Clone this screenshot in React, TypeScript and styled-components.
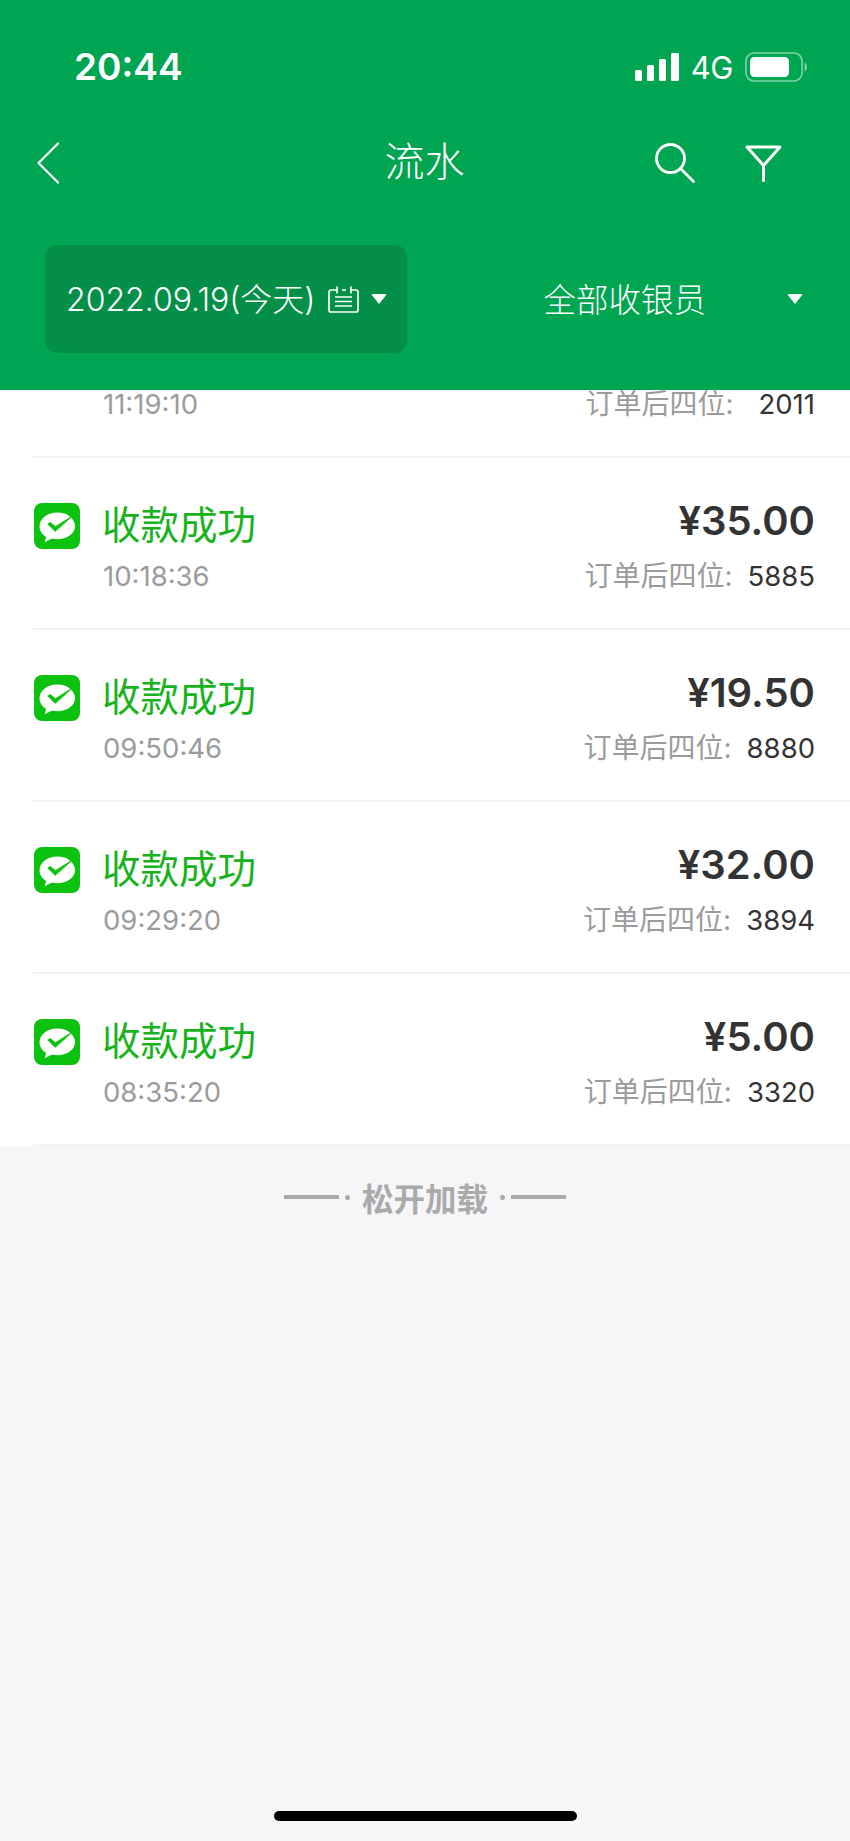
import React from 'react'
import styled, { createGlobalStyle } from 'styled-components'

const GlobalStyle = createGlobalStyle`
  html, body {
    margin: 0;
    padding: 0;
    background: #f6f6f9;
  }
  body {
    font-family: Inter, "Noto Sans CJK SC", sans-serif;
  }
`

const Screen = styled.div`
  position: relative;
  width: 850px;
  height: 1841px;
  overflow: hidden;
  background: #f6f6f9;
`

const Header = styled.header`
  background: #00a552;
  height: 390px;
  color: #fff;
`

const StatusBar = styled.div`
  height: 132px;
  padding: 0 43px 0 74px;
  box-sizing: border-box;
  display: flex;
  align-items: center;
  justify-content: space-between;
`

const Clock = styled.span`
  font-size: 37px;
  font-weight: 600;
`

const StatusIcons = styled.div`
  display: flex;
  align-items: center;
  gap: 12px;
  margin-top: 2px;
`

const Network = styled.span`
  font-size: 31px;
  font-weight: 400;
  letter-spacing: -0.5px;
`

const NavBar = styled.nav`
  height: 62px;
  padding: 0 68px;
  display: grid;
  grid-template-columns: 1fr auto 1fr;
  align-items: center;
`

const BackButton = styled.div`
  margin-left: -31px;
  line-height: 0;
`

const NavTitle = styled.h1`
  margin: 0;
  padding: 0 1px 2px 0;
  font-size: 40px;
  font-weight: 300;
  line-height: 1;
`

const NavActions = styled.div`
  display: flex;
  justify-self: end;
  align-items: center;
  gap: 50px;
`

const FilterBar = styled.div`
  margin-top: 51px;
  padding: 0 47px 0 45px;
  display: flex;
  align-items: center;
  justify-content: space-between;
`

const DatePill = styled.div`
  width: 362px;
  height: 108px;
  padding: 0 0 0 21px;
  box-sizing: border-box;
  display: flex;
  align-items: center;
  border-radius: 12px;
  background: #038f47;
  font-size: 32px;
  font-weight: 300;
`

const FilterText = styled.span`
  padding-bottom: 4px;
  white-space: nowrap;
`

const PillIcon = styled.svg`
  margin-left: 12px;
  flex: none;
`

const Caret = styled.span<{ $gap: number }>`
  flex: none;
  width: 0;
  height: 0;
  margin-left: ${({ $gap }) => $gap}px;
  border-left: 8px solid transparent;
  border-right: 8px solid transparent;
  border-top: 10px solid #fff;
  border-radius: 2px;
`

const CashierFilter = styled.div`
  display: flex;
  align-items: center;
  font-size: 32.500px;
  font-weight: 300;
`

const List = styled.section`
  background: #fff;
  padding-left: 33px;
`

const Row = styled.div<{ $clipped?: boolean }>`
  height: ${({ $clipped }) => ($clipped ? '68px' : '172px')};
  box-sizing: border-box;
  padding-right: 35px;
  border-bottom: 2px solid #f3f3f4;
  display: flex;
  align-items: flex-end;
`

const IconBox = styled.div`
  width: 70px;
  flex: none;
  align-self: flex-start;
  box-sizing: border-box;
  padding: 45px 0 0 1px;
  line-height: 0;
`

const LeftCol = styled.div`
  flex: 1;
  padding-bottom: 36px;
`

const RightCol = styled.div`
  text-align: right;
  padding-bottom: 36px;
`

const Status = styled.div`
  font-size: 38.500px;
  line-height: 50px;
  font-weight: 400;
  color: #17b21c;
  margin-bottom: 10px;
  margin-left: -1px;
`

const Time = styled.div`
  font-size: 27.500px;
  line-height: 32px;
  color: #9b9b9b;
`

const Amount = styled.div`
  font-size: 40px;
  line-height: 50px;
  font-weight: 600;
  color: #333;
  margin-bottom: 14px;
`

const OrderLine = styled.div`
  display: flex;
  justify-content: flex-end;
  align-items: baseline;
  line-height: 32px;
`

const OrderLabel = styled.span`
  font-size: 28px;
  color: #9b9b9b;
`

const OrderNo = styled.span<{ $gap: number }>`
  font-size: 27.500px;
  color: #333;
  margin-left: ${({ $gap }) => $gap}px;
`

const LoadHint = styled.div`
  height: 102px;
  display: flex;
  align-items: center;
  justify-content: center;
  color: #aaa;
  font-size: 31.500px;
  font-weight: 700;
`

const Dash = styled.i`
  width: 55px;
  height: 4px;
  background: #aaa;
`

const Dot = styled.i`
  width: 5px;
  height: 5px;
  border-radius: 50%;
  background: #aaa;
  margin: 0 6px;
`

const HintText = styled.span`
  margin: 0 6px;
`

const HomeIndicator = styled.div`
  position: absolute;
  left: 274px;
  bottom: 20px;
  width: 303px;
  height: 10px;
  border-radius: 5px;
  background: #000;
`

const rows = [
  { time: '10:18:36', amount: '¥35.00', order: '5885', gap: 15 },
  { time: '09:50:46', amount: '¥19.50', order: '8880', gap: 15 },
  { time: '09:29:20', amount: '¥32.00', order: '3894', gap: 15 },
  { time: '08:35:20', amount: '¥5.00', order: '3320', gap: 15 },
]

const SignalIcon = () => (
  <svg width="44" height="28" viewBox="0 0 44 28" fill="#fff">
    <rect x="0" y="17" width="7" height="11" rx="1.500" />
    <rect x="12" y="12" width="7" height="16" rx="1.500" />
    <rect x="24" y="6" width="7" height="22" rx="1.500" />
    <rect x="36" y="0" width="8" height="28" rx="1.500" />
  </svg>
)

const BatteryIcon = () => (
  <svg width="62" height="30" viewBox="0 0 62 30">
    <rect x="1" y="1" width="56" height="28" rx="8" fill="none" stroke="#fff" strokeOpacity="0.5" strokeWidth="1.600" />
    <rect x="5" y="5" width="39" height="20" rx="4.500" fill="#fff" />
    <path d="M59.500 10.500c1.600.6 2.500 2.400 2.500 4.500s-.9 3.900-2.500 4.500z" fill="#fff" fillOpacity="0.5" />
  </svg>
)

const BackIcon = () => (
  <svg width="22" height="42" viewBox="0 0 22 42" fill="none" stroke="#fff" strokeWidth="2.200" strokeLinecap="round" strokeLinejoin="round">
    <path d="M21 1.500 1.500 21 21 40.500" />
  </svg>
)

const SearchIcon = () => (
  <svg width="40" height="40" viewBox="0 0 40 40" fill="none" stroke="#fff" strokeWidth="2.800" strokeLinecap="round">
    <circle cx="15.500" cy="15.500" r="14" />
    <path d="M25.500 25.500 38.500 38.500" />
  </svg>
)

const FunnelIcon = () => (
  <svg width="37" height="37" viewBox="0 0 37 37" fill="none" stroke="#fff" strokeWidth="3" strokeLinecap="round" strokeLinejoin="round">
    <path d="M2 2h33L18.500 20.500z" />
    <path d="M18.500 20.500V35.500" />
  </svg>
)

const CalendarIcon = () => (
  <PillIcon width="31" height="27" viewBox="0 0 31 27" fill="none" stroke="#fff" strokeWidth="1.700">
    <path d="M9 4H3a2 2 0 0 0-2 2v18a2 2 0 0 0 2 2h25a2 2 0 0 0 2-2V6a2 2 0 0 0-2-2h-5" />
    <path d="M9 .5v7M23 .5v7M14 4h4M7 11h17M7 15.500h17M7 20h17" />
  </PillIcon>
)

const WechatPayIcon = () => (
  <svg width="46" height="46" viewBox="0 0 46 46">
    <rect width="46" height="46" rx="8" fill="#0bc30f" />
    <path d="M23.500 9.500C13.300 9.500 5.500 15.700 5.500 23.300c0 4.400 2.600 8.200 6.700 10.700l-1.500 5.200 7.300-3.600c1.800.4 3.600.6 5.500.6 10 0 17.500-5.900 17.500-12.900 0-7.600-7.500-13.800-17.500-13.800z" fill="#fff" />
    <path d="M13.300 21l3-2 5.200 4.300L40 11.500l-1 1.500-17.800 15.700z" fill="#0bc30f" />
  </svg>
)

const App: React.FC = () => (
  <Screen>
    <GlobalStyle />
    <Header>
      <StatusBar>
        <Clock>20:44</Clock>
        <StatusIcons>
          <SignalIcon />
          <Network>4G</Network>
          <BatteryIcon />
        </StatusIcons>
      </StatusBar>
      <NavBar>
        <BackButton>
          <BackIcon />
        </BackButton>
        <NavTitle>流水</NavTitle>
        <NavActions>
          <SearchIcon />
          <FunnelIcon />
        </NavActions>
      </NavBar>
      <FilterBar>
        <DatePill>
          <FilterText>2022.09.19(今天)</FilterText>
          <CalendarIcon />
          <Caret $gap={12} />
        </DatePill>
        <CashierFilter>
          <FilterText>全部收银员</FilterText>
          <Caret $gap={81} />
        </CashierFilter>
      </FilterBar>
    </Header>
    <List>
      <Row $clipped>
        <IconBox />
        <LeftCol>
          <Time>11:19:10</Time>
        </LeftCol>
        <RightCol>
          <OrderLine>
            <OrderLabel>订单后四位:</OrderLabel>
            <OrderNo $gap={25}>2011</OrderNo>
          </OrderLine>
        </RightCol>
      </Row>
      {rows.map((row) => (
        <Row key={row.time}>
          <IconBox>
            <WechatPayIcon />
          </IconBox>
          <LeftCol>
            <Status>收款成功</Status>
            <Time>{row.time}</Time>
          </LeftCol>
          <RightCol>
            <Amount>{row.amount}</Amount>
            <OrderLine>
              <OrderLabel>订单后四位:</OrderLabel>
              <OrderNo $gap={row.gap}>{row.order}</OrderNo>
            </OrderLine>
          </RightCol>
        </Row>
      ))}
    </List>
    <LoadHint>
      <Dash />
      <Dot />
      <HintText>松开加载</HintText>
      <Dot />
      <Dash />
    </LoadHint>
    <HomeIndicator />
  </Screen>
)

export default App
